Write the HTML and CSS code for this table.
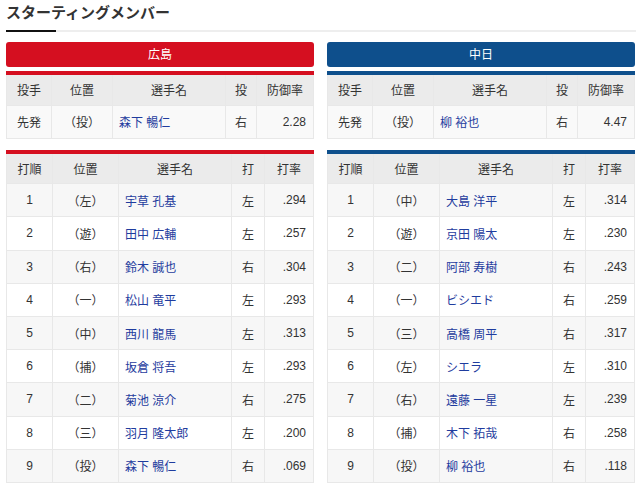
FILE: index.html
```html
<!DOCTYPE html>
<html lang="ja">
<head>
<meta charset="utf-8">
<title>スターティングメンバー</title>
<link rel="stylesheet" href="styles.css">
</head>
<body>
<div class="page">
  <h2 class="title">スターティングメンバー</h2>
  <div class="rule"><span class="rule-dark"></span><span class="rule-light"></span></div>
  <div class="teams">
    <section class="team carp">
      <div class="team-name">広島</div>
      <table class="tbl pitcher">
        <colgroup><col style="width:45px"><col style="width:61px"><col style="width:113px"><col style="width:31px"><col></colgroup>
        <thead><tr><th>投手</th><th>位置</th><th>選手名</th><th>投</th><th>防御率</th></tr></thead>
        <tbody><tr><td>先発</td><td>（投）</td><td class="name"><a>森下 暢仁</a></td><td>右</td><td class="num">2.28</td></tr></tbody>
      </table>
      <table class="tbl lineup">
        <colgroup><col style="width:46px"><col style="width:66px"><col style="width:113px"><col style="width:33px"><col></colgroup>
        <thead><tr><th>打順</th><th>位置</th><th>選手名</th><th>打</th><th>打率</th></tr></thead>
        <tbody>
          <tr><td>1</td><td>（左）</td><td class="name"><a>宇草 孔基</a></td><td>左</td><td class="num">.294</td></tr>
          <tr><td>2</td><td>（遊）</td><td class="name"><a>田中 広輔</a></td><td>左</td><td class="num">.257</td></tr>
          <tr><td>3</td><td>（右）</td><td class="name"><a>鈴木 誠也</a></td><td>右</td><td class="num">.304</td></tr>
          <tr><td>4</td><td>（一）</td><td class="name"><a>松山 竜平</a></td><td>左</td><td class="num">.293</td></tr>
          <tr><td>5</td><td>（中）</td><td class="name"><a>西川 龍馬</a></td><td>左</td><td class="num">.313</td></tr>
          <tr><td>6</td><td>（捕）</td><td class="name"><a>坂倉 将吾</a></td><td>左</td><td class="num">.293</td></tr>
          <tr><td>7</td><td>（二）</td><td class="name"><a>菊池 涼介</a></td><td>右</td><td class="num">.275</td></tr>
          <tr><td>8</td><td>（三）</td><td class="name"><a>羽月 隆太郎</a></td><td>左</td><td class="num">.200</td></tr>
          <tr><td>9</td><td>（投）</td><td class="name"><a>森下 暢仁</a></td><td>右</td><td class="num">.069</td></tr>
        </tbody>
      </table>
    </section>
    <section class="team dragons">
      <div class="team-name">中日</div>
      <table class="tbl pitcher">
        <colgroup><col style="width:45px"><col style="width:61px"><col style="width:113px"><col style="width:31px"><col></colgroup>
        <thead><tr><th>投手</th><th>位置</th><th>選手名</th><th>投</th><th>防御率</th></tr></thead>
        <tbody><tr><td>先発</td><td>（投）</td><td class="name"><a>柳 裕也</a></td><td>右</td><td class="num">4.47</td></tr></tbody>
      </table>
      <table class="tbl lineup">
        <colgroup><col style="width:46px"><col style="width:66px"><col style="width:113px"><col style="width:33px"><col></colgroup>
        <thead><tr><th>打順</th><th>位置</th><th>選手名</th><th>打</th><th>打率</th></tr></thead>
        <tbody>
          <tr><td>1</td><td>（中）</td><td class="name"><a>大島 洋平</a></td><td>左</td><td class="num">.314</td></tr>
          <tr><td>2</td><td>（遊）</td><td class="name"><a>京田 陽太</a></td><td>左</td><td class="num">.230</td></tr>
          <tr><td>3</td><td>（二）</td><td class="name"><a>阿部 寿樹</a></td><td>右</td><td class="num">.243</td></tr>
          <tr><td>4</td><td>（一）</td><td class="name"><a>ビシエド</a></td><td>右</td><td class="num">.259</td></tr>
          <tr><td>5</td><td>（三）</td><td class="name"><a>高橋 周平</a></td><td>右</td><td class="num">.317</td></tr>
          <tr><td>6</td><td>（左）</td><td class="name"><a>シエラ</a></td><td>左</td><td class="num">.310</td></tr>
          <tr><td>7</td><td>（右）</td><td class="name"><a>遠藤 一星</a></td><td>左</td><td class="num">.239</td></tr>
          <tr><td>8</td><td>（捕）</td><td class="name"><a>木下 拓哉</a></td><td>右</td><td class="num">.258</td></tr>
          <tr><td>9</td><td>（投）</td><td class="name"><a>柳 裕也</a></td><td>右</td><td class="num">.118</td></tr>
        </tbody>
      </table>
    </section>
  </div>
</div>
</body>
</html>
```
FILE: styles.css
```css
* { box-sizing: border-box; }
html, body { margin: 0; padding: 0; background: #fff; }
body {
  font-family: "Liberation Sans", "Noto Sans CJK JP", sans-serif;
  font-size: 12px;
  color: #333;
}
.page {
  width: 630px;
  margin-left: 6px;
}
.title {
  margin: 0;
  font-size: 15px;
  font-weight: bold;
  line-height: 26px;
  color: #333;
  height: 30px;
}
.rule {
  display: flex;
  height: 2px;
}
.rule-dark { width: 50px; background: #111; }
.rule-light { flex: 1; background: #eee; }
.teams {
  display: flex;
  gap: 13px;
  margin-top: 10px;
}
.team {
  width: 308px;
}
.team-name {
  height: 25px;
  line-height: 26px;
  text-align: center;
  color: #fff;
  font-size: 12px;
  border-radius: 3px;
}
.carp .team-name { background: #d50f20; }
.dragons .team-name { background: #0e4f8c; }
.tbl {
  width: 308px;
  border-collapse: collapse;
  table-layout: fixed;
  border: 1px solid #ddd;
}
.carp .tbl { border-top: 4px solid #d50f20; }
.dragons .tbl { border-top: 4px solid #0e4f8c; }
.pitcher { margin-top: 4px; }
.lineup { margin-top: 11px; }
.tbl th, .tbl td {
  border: 1px solid #e8e8e8;
  text-align: center;
  padding: 0 7px;
  font-weight: normal;
  white-space: nowrap;
}
.tbl thead th {
  background: #ebebeb;
  height: 32px;
}
.tbl td { height: 33.2px; }
.pitcher tbody tr { background: #f9f9f9; }
.lineup tbody tr:nth-child(odd) { background: #f7f7f7; }
.lineup tbody tr:nth-child(even) { background: #fff; }
.tbl td.name { text-align: left; padding-left: 6px; }
.tbl td.num { text-align: right; padding-right: 7px; }
.name a { color: #1f3c9e; text-decoration: none; }
```
